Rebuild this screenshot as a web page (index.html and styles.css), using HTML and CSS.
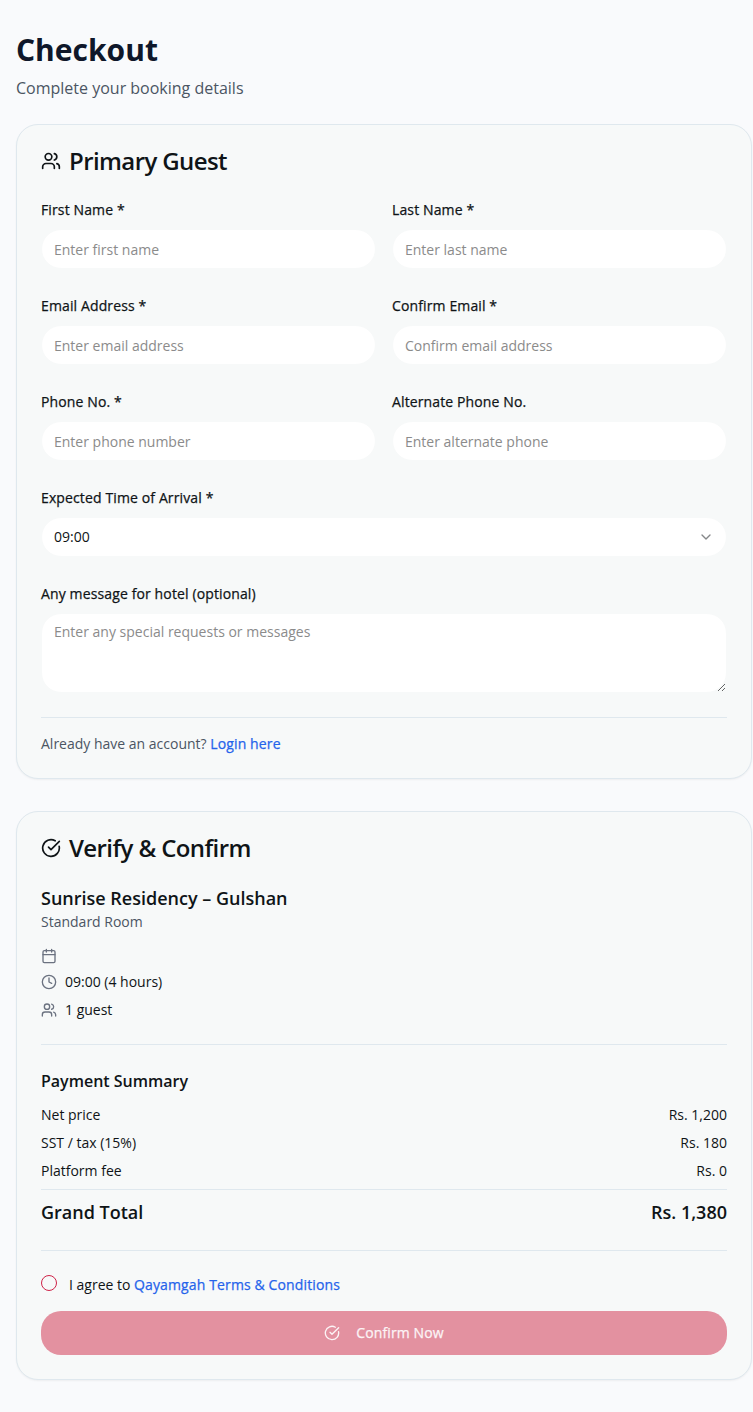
FILE: index.html
```html
<!DOCTYPE html>
<html lang="en">
<head>
<meta charset="utf-8">
<title>Checkout</title>
<link rel="stylesheet" href="styles.css">
</head>
<body>
<svg class="sprite" width="0" height="0">
  <symbol id="users" viewBox="0 0 24 24"><path d="M16 21v-2a4 4 0 0 0-4-4H6a4 4 0 0 0-4 4v2"/><path d="M16 3.128a4 4 0 0 1 0 7.744"/><path d="M22 21v-2a4 4 0 0 0-3-3.87"/><circle cx="9" cy="7" r="4"/></symbol>
  <symbol id="check" viewBox="0 0 24 24"><path d="M21.801 10A10 10 0 1 1 17 3.335"/><path d="m9 11 3 3L22 4"/></symbol>
  <symbol id="calendar" viewBox="0 0 24 24"><path d="M8 2v4M16 2v4M3 10h18"/><rect x="3" y="4" width="18" height="18" rx="2"/></symbol>
  <symbol id="clock" viewBox="0 0 24 24"><path d="M12 6v6l4 2"/><circle cx="12" cy="12" r="10"/></symbol>
  <symbol id="chevron" viewBox="0 0 24 24"><path d="m6 9 6 6 6-6"/></symbol>
</svg>
<main class="page">
  <header class="page-header">
    <h1>Checkout</h1>
    <p>Complete your booking details</p>
  </header>

  <section class="card">
    <h2 class="card-title"><svg class="icon icon-lg"><use href="#users"/></svg>Primary Guest</h2>
    <form class="form">
      <label class="field"><span>First Name *</span><input class="control" placeholder="Enter first name"></label>
      <label class="field"><span>Last Name *</span><input class="control" placeholder="Enter last name"></label>
      <label class="field"><span>Email Address *</span><input class="control" placeholder="Enter email address"></label>
      <label class="field"><span>Confirm Email *</span><input class="control" placeholder="Confirm email address"></label>
      <label class="field"><span>Phone No. *</span><input class="control" placeholder="Enter phone number"></label>
      <label class="field"><span>Alternate Phone No.</span><input class="control" placeholder="Enter alternate phone"></label>
      <div class="field wide"><span>Expected Time of Arrival *</span><button type="button" class="control select">09:00<svg class="icon"><use href="#chevron"/></svg></button></div>
      <label class="field wide"><span>Any message for hotel (optional)</span><textarea class="control message" placeholder="Enter any special requests or messages"></textarea></label>
    </form>
    <p class="login">Already have an account? <a>Login here</a></p>
  </section>

  <section class="card">
    <h2 class="card-title"><svg class="icon icon-lg"><use href="#check"/></svg>Verify &amp; Confirm</h2>
    <div class="booking">
      <h3>Sunrise Residency – Gulshan</h3>
      <p class="room">Standard Room</p>
      <ul class="details">
        <li class="date"><svg class="icon"><use href="#calendar"/></svg></li>
        <li><svg class="icon"><use href="#clock"/></svg>09:00 (4 hours)</li>
        <li><svg class="icon"><use href="#users"/></svg>1 guest</li>
      </ul>
    </div>
    <div class="payment">
      <h4>Payment Summary</h4>
      <div class="row"><span>Net price</span><span>Rs. 1,200</span></div>
      <div class="row"><span>SST / tax (15%)</span><span>Rs. 180</span></div>
      <div class="row"><span>Platform fee</span><span>Rs. 0</span></div>
      <div class="row total"><span>Grand Total</span><span>Rs. 1,380</span></div>
    </div>
    <div class="terms"><span class="checkbox"></span><span>I agree to <a>Qayamgah Terms &amp; Conditions</a></span></div>
    <button class="confirm" disabled><svg class="icon"><use href="#check"/></svg>Confirm Now</button>
  </section>
</main>
</body>
</html>
```
FILE: styles.css
```css
* { box-sizing: border-box; margin: 0; padding: 0; }
body {
  background: #f9fafc;
  color: #0f1417;
  font: 14px/20px "Open Sans", sans-serif;
  overflow: hidden;
}
.sprite { display: block; height: 0; }
.page { width: 768px; min-height: 1412px; padding: 32px 16px; }
.page-header { margin-bottom: 24px; }
h1 { font-size: 30px; line-height: 36px; font-weight: 700; color: #0f172a; }
.page-header p { margin-top: 8px; font-size: 16px; line-height: 24px; color: #4b5563; }
.card {
  padding: 24px;
  border: 1px solid #dfe8ee;
  border-radius: 22px;
  background: #f7f9f9;
  box-shadow: 0 1px 2px rgba(0, 0, 0, 0.05);
}
.card + .card { margin-top: 32px; }
.card-title {
  display: flex;
  align-items: center;
  gap: 8px;
  height: 24px;
  font-size: 24px;
  line-height: 24px;
  font-weight: 600;
  letter-spacing: -0.6px;
}
.icon {
  width: 16px;
  height: 16px;
  flex: none;
  fill: none;
  stroke: currentColor;
  stroke-width: 2;
  stroke-linecap: round;
  stroke-linejoin: round;
}
.icon-lg { width: 20px; height: 20px; }
.form { display: grid; grid-template-columns: 1fr 1fr; gap: 27px 16px; margin-top: 27px; }
.field { display: flex; flex-direction: column; gap: 9px; }
/* Medium emphasis, between the regular and semibold faces */
.field > span, a, .confirm {
  font-family: "Open Sans", sans-serif;
  font-weight: 500;
  letter-spacing: 0.125px;
  -webkit-text-stroke: 0.25px currentColor;
}
.wide { grid-column: span 2; }
.control {
  width: 100%;
  height: 40px;
  padding: 0 12px;
  border: 1px solid #f7f9f9;
  border-radius: 20px;
  background: #fff;
  color: #0f1417;
  font: 400 14px/20px "Open Sans", sans-serif;
}
.control::placeholder { color: #8b8b8b; opacity: 1; }
.select { display: flex; align-items: center; justify-content: space-between; }
.select .icon { color: #858789; }
.message { display: block; height: 80px; padding: 8px 12px; resize: vertical; }
.login { margin-top: 24px; padding-top: 16px; border-top: 1px solid #dfe8ee; color: #4b5563; line-height: 20px; }
a { color: #2563eb; }
.booking { margin-top: 24px; padding-bottom: 24px; border-bottom: 1px solid #dfe8ee; }
h3 { font-size: 18px; line-height: 28px; font-weight: 600; }
.room { color: #4b5563; }
.details { display: grid; gap: 8px; margin-top: 16px; list-style: none; }
.details li { display: flex; align-items: center; gap: 8px; height: 20px; }
.details .date { height: 16px; }
.details .icon { color: #6b7280; }
.payment { padding: 24px 0; border-bottom: 1px solid #dfe8ee; }
h4 { margin-bottom: 12px; font-size: 16px; line-height: 24px; font-weight: 600; }
.row { display: flex; justify-content: space-between; }
.row + .row { margin-top: 8px; }
.row.total { padding-top: 8px; border-top: 1px solid #dfe8ee; font-size: 18px; line-height: 28px; font-weight: 600; }
.terms { display: flex; gap: 12px; margin-top: 24px; line-height: 20px; }
.checkbox { width: 16px; height: 16px; border: 1px solid #cf2349; border-radius: 50%; }
.confirm {
  display: flex;
  align-items: center;
  justify-content: center;
  gap: 16px;
  width: 100%;
  height: 44px;
  margin-top: 16px;
  border: 0;
  border-radius: 20px;
  background: #e391a0;
  color: #fcf4f6;
  font-size: 14px;
  line-height: 20px;
}
```
